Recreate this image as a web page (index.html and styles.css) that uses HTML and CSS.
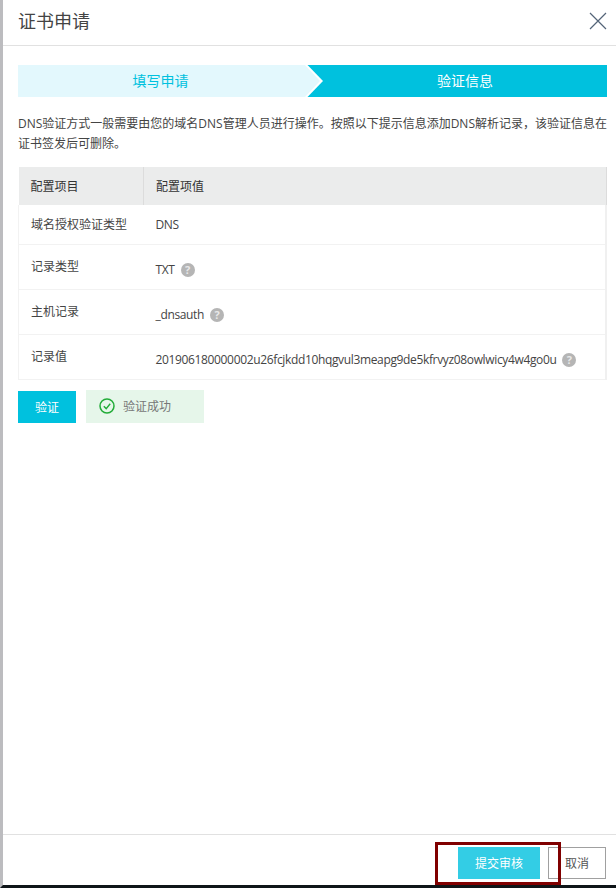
FILE: index.html
```html
<!DOCTYPE html>
<html lang="zh-CN">
<head>
<meta charset="utf-8">
<title>证书申请</title>
<link rel="stylesheet" href="styles.css">
</head>
<body>
<div class="dialog">
  <header class="head">
    <h1 class="title">证书申请</h1>
    <svg class="close" width="18" height="18" viewBox="0 0 18 18"><path d="M1 1L17 17M17 1L1 17" stroke="#546478" stroke-width="1.2" fill="none"/></svg>
  </header>
  <main class="body">
    <div class="steps">
      <div class="step step-done">填写申请</div>
      <div class="step step-active">验证信息</div>
      <svg class="chevron" width="18" height="32" viewBox="0 0 18 32"><path d="M0 0H2.5L18 16L2.5 32H0Z" fill="#fff"/><path d="M0 0L15 16L0 32Z" fill="#e3f8fd"/></svg>
    </div>
    <p class="intro">DNS验证方式一般需要由您的域名DNS管理人员进行操作。按照以下提示信息添加DNS解析记录<span class="mid">，</span>该验证信息在<br>证书签发后可删除。</p>
    <table class="records">
      <thead>
        <tr><th class="col-a">配置项目</th><th>配置项值</th></tr>
      </thead>
      <tbody>
        <tr class="r1"><td>域名授权验证类型</td><td><span class="val">DNS</span></td></tr>
        <tr class="r2"><td><span class="lab">记录类型</span></td><td class="cell"><span class="val">TXT</span><span class="help">?</span></td></tr>
        <tr class="r2"><td><span class="lab">主机记录</span></td><td class="cell"><span class="val">_dnsauth</span><span class="help">?</span></td></tr>
        <tr class="r2"><td><span class="lab">记录值</span></td><td class="cell"><span class="val">201906180000002u26fcjkdd10hqgvul3meapg9de5kfrvyz08owlwicy4w4go0u</span><span class="help">?</span></td></tr>
      </tbody>
    </table>
    <div class="verify">
      <button class="btn-verify">验证</button>
      <div class="success">
        <svg width="16" height="16" viewBox="0 0 16 16"><circle cx="8" cy="8" r="7" fill="none" stroke="#22ac38" stroke-width="1.5"/><path d="M4.8 8.2L7.2 10.6L11.2 5.8" fill="none" stroke="#22ac38" stroke-width="1.4"/></svg>
        <span>验证成功</span>
      </div>
    </div>
  </main>
  <footer class="foot">
    <button class="btn-submit">提交审核</button>
    <button class="btn-cancel">取消</button>
    <div class="mark"></div>
  </footer>
</div>
</body>
</html>
```
FILE: styles.css
```css
* { box-sizing: border-box; }
html, body { margin: 0; height: 100%; }
body {
  background: #fff;
  border-left: 3px solid #bcbcbf;
  border-bottom: 3px solid #0f1518;
  font-family: "Open Sans", "Noto Sans CJK SC", sans-serif;
  font-size: 12px;
  color: #333;
}
.dialog { height: 885px; display: flex; flex-direction: column; }
.head {
  height: 46px;
  border-bottom: 1px solid #e1e1e1;
  padding: 0 9px 0 15px;
  display: flex;
  align-items: center;
  justify-content: space-between;
  flex: none;
}
.title { margin: -4px 0 0; font-size: 18px; font-weight: 400; line-height: 44px; color: #444; }
.close { margin-top: -3px; }
.body { flex: 1; padding: 19px 9px 0 15px; }
.steps { position: relative; display: flex; height: 32px; }
.step { height: 32px; line-height: 32px; text-align: center; font-size: 14px; }
.step-done { width: 287px; background: #e3f8fd; color: #00c1de; padding-right: 2px; }
.step-active { flex: 1; background: #00c1de; color: #fff; padding-left: 18px; }
.chevron { position: absolute; left: 287px; top: 0; }
.intro { margin: 9px 0 0; line-height: 20px; color: #444; height: 61px; padding-top: 7px; white-space: nowrap; }
.mid { font-family: "Noto Sans CJK TC", sans-serif; }
.records { width: 589px; border-collapse: collapse; table-layout: fixed; }
.records th {
  height: 38px; background: #ebecec; font-weight: 400; text-align: left;
  padding: 0 12px; border-right: 1px solid #dcdcdc; color: #333;
}
.col-a { width: 125px; }
.records td { padding: 0 12px; border: 1px solid #f2f2f2; border-top: 0; border-right: 0; color: #444; }
.records td:last-child { border-left: 0; border-right: 2px solid #f0f0f0; white-space: nowrap; }
.records td.cell { padding-top: 5px; }
.r1 td { height: 39px; }
.r2 td { height: 45px; }
.lab { position: relative; top: -1px; }
.val { vertical-align: middle; letter-spacing: -0.35px; }
.help {
  display: inline-block; vertical-align: middle; width: 14px; height: 14px; margin-left: 6px;
  border-radius: 50%; background: #b5b5b5; color: #e8e8e8; font-size: 11px; line-height: 14px;
  text-align: center; font-weight: 700;
}
.verify { display: flex; gap: 10px; margin-top: 10px; align-items: flex-start; }
.btn-verify {
  width: 58px; height: 32px; margin-top: 1px; border: 0; background: #00c1de; color: #fff;
  font: inherit; font-size: 12px; padding: 0;
}
.success {
  width: 118px; height: 33px; background: #e6f6ea; display: flex; align-items: center;
  gap: 8px; padding-left: 13px; color: #777;
}
.foot {
  position: relative; height: 51px; flex: none; border-top: 1px solid #e1e1e1;
  display: flex; justify-content: flex-end; align-items: flex-start; gap: 8px; padding: 12px 10px 0 0;
}
.foot button { font: inherit; font-size: 12px; padding: 0; }
.btn-submit { width: 82px; height: 32px; border: 0; background: #33cde5; color: #fff; }
.btn-cancel { width: 58px; height: 32px; border: 1px solid #a0a0a0; background: #fff; color: #555; }
.mark {
  position: absolute; left: 432px; top: 7px; width: 126px; height: 43px;
  border: 3px solid #800000; pointer-events: none;
}
```
